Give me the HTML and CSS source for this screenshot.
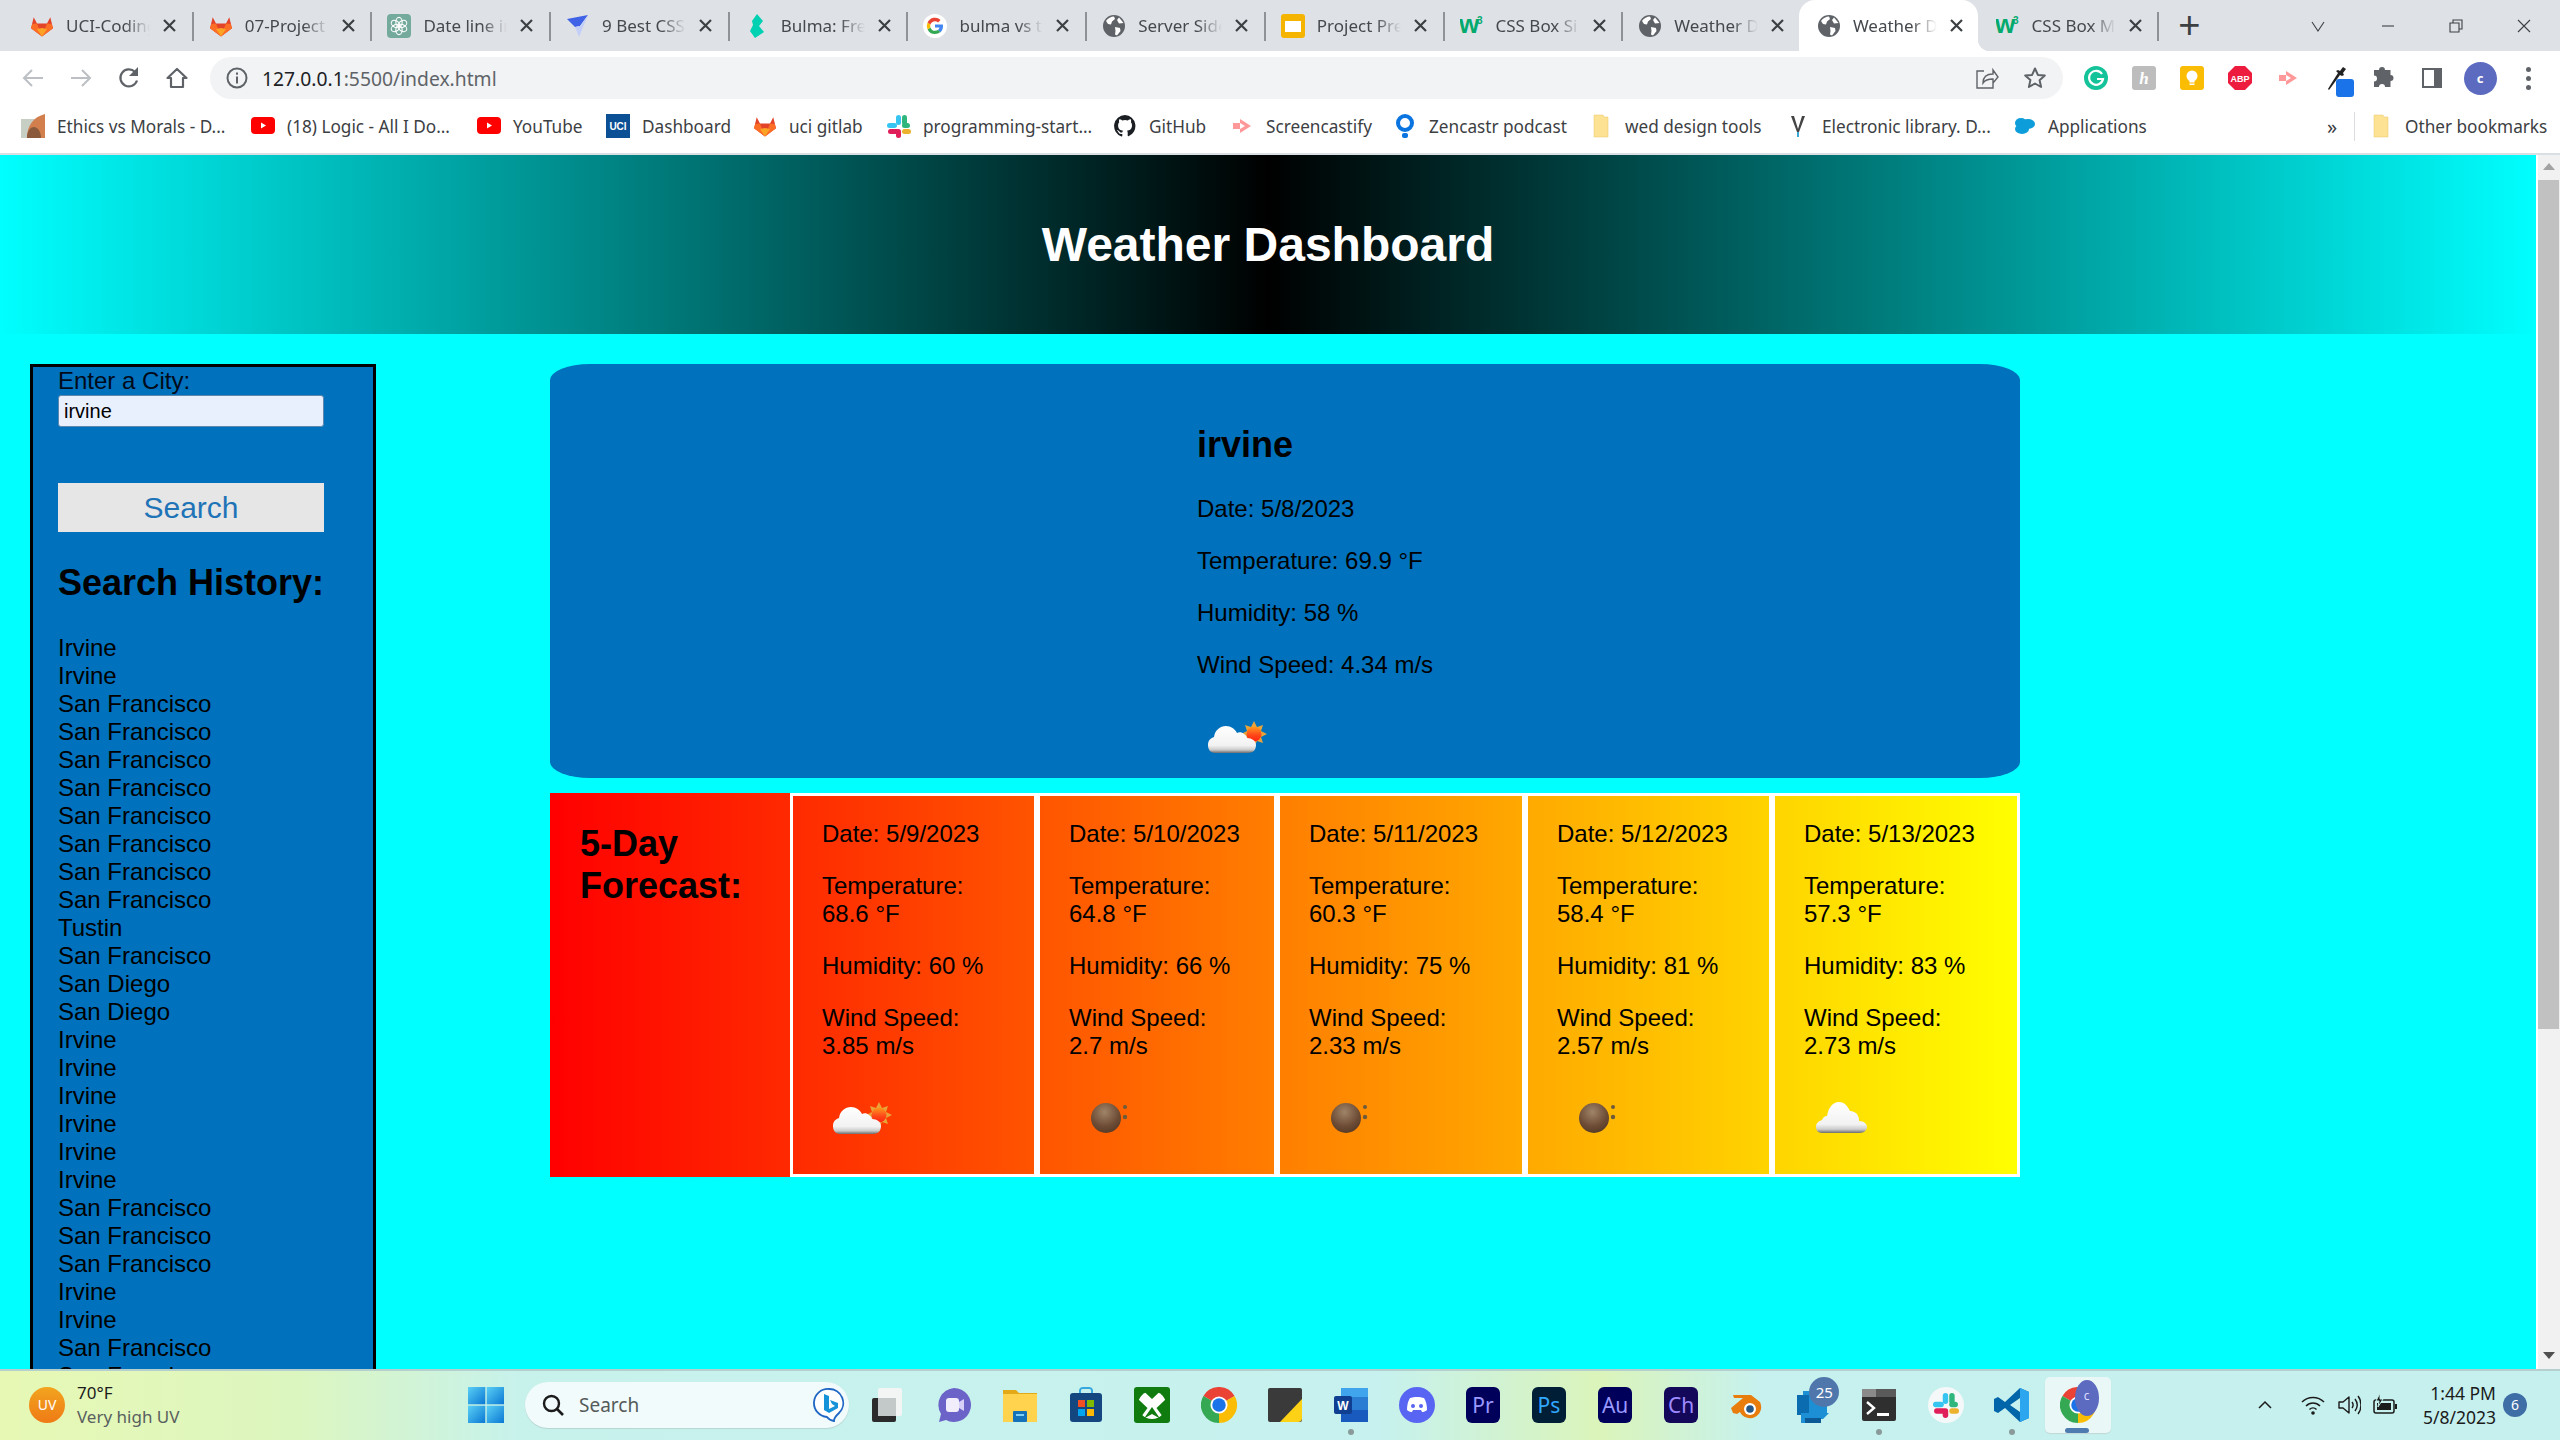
FILE: index.html
```html
<!DOCTYPE html>
<html lang="en">
<head>
<meta charset="utf-8">
<title>Weather Dashboard</title>
<link rel="stylesheet" href="styles.css">
</head>
<body>
<svg class="defs" aria-hidden="true">
  <defs>
    <linearGradient id="cloudfill" x1="0" y1="0" x2="0" y2="1">
      <stop offset="0" stop-color="#fff"/><stop offset=".72" stop-color="#f2f2f2"/><stop offset=".88" stop-color="#ccc"/><stop offset="1" stop-color="#6d6d6d"/>
    </linearGradient>
    <radialGradient id="ballfill" cx=".45" cy=".3" r=".8">
      <stop offset="0" stop-color="#a08468"/><stop offset=".6" stop-color="#6d4c35"/><stop offset="1" stop-color="#4d3525"/>
    </radialGradient>
    <linearGradient id="sunfill" x1="0" y1="0" x2="0" y2="1"><stop offset="0" stop-color="#ff9a1f"/><stop offset=".55" stop-color="#ff4a1a"/><stop offset="1" stop-color="#f21"/></linearGradient>
    <filter id="soft"><feGaussianBlur stdDeviation=".5"/></filter>
    <linearGradient id="winlogo" x1="0" y1="0" x2="1" y2="1"><stop offset="0" stop-color="#5ad0f5"/><stop offset="1" stop-color="#0a78d4"/></linearGradient>
    <symbol id="gitlab" viewBox="0 0 24 24">
      <path fill="#e24329" d="M12 22.5 1 14.2 3.7 3.2 7 9.5h10l3.3-6.3L23 14.2z"/>
      <path fill="#fc6d26" d="M12 22.5 1 14.2 2.4 10 7 9.5zM12 22.5 23 14.2 21.6 10 17 9.5z"/>
      <path fill="#fca326" d="M12 22.5 7 15 12 14l5 1z"/>
    </symbol>
    <symbol id="openai" viewBox="0 0 24 24">
      <rect width="24" height="24" rx="4" fill="#74aa9c"/>
      <g fill="none" stroke="#fff" stroke-width="1.1"><ellipse cx="12" cy="8" rx="3.2" ry="4.6"/><ellipse cx="12" cy="8" rx="3.2" ry="4.6" transform="rotate(60 12 12)"/><ellipse cx="12" cy="8" rx="3.2" ry="4.6" transform="rotate(120 12 12)"/><ellipse cx="12" cy="8" rx="3.2" ry="4.6" transform="rotate(180 12 12)"/><ellipse cx="12" cy="8" rx="3.2" ry="4.6" transform="rotate(240 12 12)"/><ellipse cx="12" cy="8" rx="3.2" ry="4.6" transform="rotate(300 12 12)"/></g>
    </symbol>
    <symbol id="plane" viewBox="0 0 24 24">
      <path fill="#3f62e6" d="M1 5 22 1 14 12 9 13z"/>
      <path fill="#c3cff8" d="M9 13 14 12 22 1 13 23z"/>
    </symbol>
    <symbol id="bulma" viewBox="0 0 24 24"><path fill="#00d1b2" d="M7 7 12 0l6 7-4 5 5 6-9 6-5-7 3-6z"/></symbol>
    <symbol id="google" viewBox="0 0 24 24">
      <circle cx="12" cy="12" r="12" fill="#fff"/>
      <path fill="#4285f4" d="M20 12.2c0-.6 0-1.1-.1-1.6H12v3h4.5a3.900 3.900 0 0 1-1.700 2.500l2.700 2.100c1.600-1.500 2.500-3.600 2.500-6z"/>
      <path fill="#34a853" d="M12 20c2.200 0 4-.7 5.500-1.900l-2.700-2.100c-.7.500-1.700.800-2.800.800-2.100 0-4-1.500-4.600-3.400L4.600 15.500A8 8 0 0 0 12 20z"/>
      <path fill="#fbbc05" d="M7.400 13.400a5 5 0 0 1 0-2.900L4.600 8.400a8 8 0 0 0 0 7.100z"/>
      <path fill="#ea4335" d="M12 7.200c1.200 0 2.300.4 3.100 1.200l2.400-2.400A8 8 0 0 0 4.600 8.400l2.800 2.100C8 8.600 9.900 7.200 12 7.200z"/>
    </symbol>
    <symbol id="globe" viewBox="0 0 24 24">
      <circle cx="12" cy="12" r="11" fill="#5f6368"/>
      <path fill="#fff" d="M4 7c2-3 5-4.500 8-4.500l1 2.500-3 2.500-1 3-3-.5zM13 13l5 1 .5 3-3.500 4.500-2-1 .5-3.500zM17 3.500 21.500 9 17 9.500 15 6z"/>
    </symbol>
    <symbol id="slides" viewBox="0 0 24 24"><rect width="24" height="24" rx="3" fill="#f4b400"/><rect x="4" y="7" width="16" height="11" fill="#fff"/></symbol>
    <symbol id="w3" viewBox="0 0 24 24"><text x="-1" y="19" class="w3w">w</text><text x="17" y="10" class="w3n">3</text></symbol>
    <symbol id="close" viewBox="0 0 13 13"><path fill="none" stroke="#3c4043" stroke-width="2.200" d="M1 1l11 11M12 1 1 12"/></symbol>
    <symbol id="yt" viewBox="0 0 24 24"><rect y="3" width="24" height="17" rx="4" fill="#f00"/><path fill="#fff" d="M10 8.500v6l5-3z"/></symbol>
    <symbol id="ethics" viewBox="0 0 24 24"><rect y="5" width="24" height="19" fill="#c7cfc4"/><path fill="#d27f4d" d="M6 24C6 12 12 3 24 0v24z"/><path fill="#8b5a3c" d="M6 24c0-7 3-11 7-11s7 5 7 11z"/></symbol>
    <symbol id="uci" viewBox="0 0 24 24"><rect width="24" height="24" fill="#0b4f94"/><text x="12" y="16" class="uci">UCI</text></symbol>
    <symbol id="slack" viewBox="0 0 24 24">
      <g fill="#36c5f0"><rect x="9" y="1" width="5" height="10" rx="2.500"/><rect x="1" y="9" width="10" height="5" rx="2.500" transform="translate(-1 0)"/></g>
      <g fill="#2eb67d"><rect x="15" y="1" width="5" height="10" rx="2.500"/><rect x="15" y="9" width="8" height="5" rx="2.500"/></g>
      <g fill="#ecb22e"><rect x="15" y="15" width="9" height="5" rx="2.500"/><rect x="9" y="18" width="5" height="5" rx="2.500"/></g>
      <g fill="#e01e5a"><rect x="3" y="15" width="11" height="5" rx="2.500" transform="translate(-2 0)"/><rect x="9" y="15" width="5" height="9" rx="2.500"/></g>
    </symbol>
    <symbol id="github" viewBox="0 0 24 24"><path fill="#1b1f23" d="M12 1a11 11 0 0 0-3.500 21.400c.6.100.8-.200.800-.500v-2c-3.100.700-3.700-1.400-3.700-1.400-.500-1.300-1.200-1.600-1.200-1.600-1-.700.100-.700.100-.700 1.100.100 1.700 1.100 1.700 1.100 1 1.700 2.600 1.200 3.200.900.100-.700.400-1.200.700-1.500-2.500-.300-5-1.200-5-5.400 0-1.200.400-2.200 1.100-3-.100-.300-.500-1.400.100-2.900 0 0 .900-.300 3 1.100a10 10 0 0 1 5.500 0c2.100-1.400 3-1.100 3-1.100.600 1.500.200 2.600.100 2.900.700.800 1.100 1.800 1.100 3 0 4.200-2.600 5.100-5 5.400.400.300.700 1 .700 2v3c0 .300.200.600.800.500A11 11 0 0 0 12 1z"/></symbol>
    <symbol id="castify" viewBox="0 0 24 24"><path fill="#f99" d="M3 9h7V5l11 7-11 7v-4H3z"/><path fill="#fff" d="M10 9l5 3-5 3z"/></symbol>
    <symbol id="zencastr" viewBox="0 0 24 24"><circle cx="12" cy="9" r="7" fill="none" stroke="#0a74e0" stroke-width="4"/><rect x="9" y="19" width="6" height="5" rx="2" fill="#0a74e0"/></symbol>
    <symbol id="folder" viewBox="0 0 24 24"><path fill="#fde293" stroke="#e6c566" stroke-width=".5" d="M5 1h9l1 2h4v20H5z"/></symbol>
    <symbol id="vlib" viewBox="0 0 24 24"><path fill="#444" d="M5 2h3l4 13 4-13h3l-6 16h-2z"/><rect x="11" y="18" width="2" height="5" fill="#3ba7d6"/></symbol>
    <symbol id="cloudsf" viewBox="0 0 24 24"><g fill="#0d9dda"><ellipse cx="9" cy="9" rx="6" ry="5"/><ellipse cx="16" cy="10" rx="7" ry="5"/><ellipse cx="10" cy="15" rx="7" ry="5"/></g></symbol>

    <symbol id="wx-partly" viewBox="0 0 80 76">
      <g filter="url(#soft)">
        <polygon fill="#e8a33a" points="57,18 60,24 66,22 64,28 70,31 64,34 66,40 60,38 57,44 54,38 48,40 50,34 44,31 50,28 48,22 54,24"/>
        <circle cx="57" cy="31" r="7.500" fill="url(#sunfill)"/>
        <path fill="url(#cloudfill)" d="M18 50c-5 0-7-4-7-8 0-5 3-7 6-8 1-7 6-11 12-11 5 0 9 3 11 7 2-1 5-1 7 1 2 1 3 3 3 4 5 0 9 3 9 7 0 5-3 8-8 8z"/>
      </g>
    </symbol>
    <symbol id="wx-cloud" viewBox="0 0 80 76">
      <path filter="url(#soft)" fill="url(#cloudfill)" d="M18 49c-4 0-6-3-6-6 0-4 3-6 6-7 1-2 2-4 5-4 1-7 5-14 12-14 6 0 9 5 11 9 0 0 6 0 8 5 1 2 1 3 1 5 5 0 8 3 8 6 0 3-3 6-7 6z"/>
    </symbol>
    <symbol id="wx-rain" viewBox="0 0 80 76">
      <g filter="url(#soft)">
        <ellipse cx="37" cy="34" rx="15" ry="15" fill="url(#ballfill)"/>
        <circle cx="56" cy="23" r="2" fill="#6d5a3a"/><circle cx="56" cy="33" r="2.200" fill="#6d5a3a"/>
      </g>
    </symbol>

    <symbol id="arrow-l" viewBox="0 0 24 24"><path fill="none" stroke="currentColor" stroke-width="2" d="M22 12H3M11 4l-8 8 8 8"/></symbol>
    <symbol id="arrow-r" viewBox="0 0 24 24"><path fill="none" stroke="currentColor" stroke-width="2" d="M2 12h19M13 4l8 8-8 8"/></symbol>
    <symbol id="reload" viewBox="0 0 24 24"><path fill="none" stroke="currentColor" stroke-width="2.200" d="M20 14.500A8.500 8.500 0 1 1 18 6"/><path fill="currentColor" d="M21 1v9h-9z"/></symbol>
    <symbol id="home" viewBox="0 0 24 24"><path fill="none" stroke="currentColor" stroke-width="2.200" stroke-linejoin="round" d="M12 3 2.500 12H6v9h12v-9h3.500z"/></symbol>
    <symbol id="info" viewBox="0 0 24 24"><circle cx="12" cy="12" r="9.500" fill="none" stroke="currentColor" stroke-width="2"/><rect x="11" y="10.500" width="2" height="7" fill="currentColor"/><rect x="11" y="6.500" width="2" height="2.200" fill="currentColor"/></symbol>
    <symbol id="share" viewBox="0 0 24 24"><path fill="none" stroke="currentColor" stroke-width="1.400" d="M9 5H2v17h16v-5M8 17c0-6 4-9 10-9V4l5 7-5 6v-4c-5 0-8 1-10 4z"/></symbol>
    <symbol id="star" viewBox="0 0 24 24"><path fill="none" stroke="currentColor" stroke-width="2" stroke-linejoin="round" d="m12 2.500 2.900 6.400 6.900.700-5.200 4.600 1.500 6.800L12 17.500 5.900 20.900l1.500-6.800L2.200 9.500l6.900-.600z"/></symbol>
    <symbol id="grammarly" viewBox="0 0 24 24"><circle cx="12" cy="12" r="12" fill="#15c39a"/><path fill="none" stroke="#fff" stroke-width="2.200" d="M18 8a7 7 0 1 0 1 5h-6"/></symbol>
    <symbol id="honey" viewBox="0 0 24 24"><rect width="24" height="24" rx="3" fill="#bdbdbd"/><text x="12" y="18" class="hny">h</text></symbol>
    <symbol id="keep" viewBox="0 0 24 24"><rect width="24" height="24" rx="3" fill="#fbbc04"/><circle cx="12" cy="10" r="5.500" fill="#fff"/><rect x="9.500" y="15" width="5" height="1.500" fill="#fff"/><rect x="9.500" y="17.500" width="5" height="1.500" fill="#fff"/></symbol>
    <symbol id="abp" viewBox="0 0 24 24"><path fill="#ed1c3f" d="M7 0h10l7 7v10l-7 7H7l-7-7V7z"/><text x="12" y="16" class="abp">ABP</text></symbol>
    <symbol id="dropper" viewBox="0 0 24 24"><path fill="#222" d="M8 20 5 24l-1-1 3-5L14 7l-2-2 2-1 2 1 3-4 3 2-3 4 1 2-2 1-2-1z"/></symbol>
    <symbol id="puzzle" viewBox="0 0 24 24"><path fill="#5f6368" d="M10 1a2.800 2.800 0 0 1 3 3h5.500v5a3 3 0 0 1 0 6v6H13a3 3 0 0 0-6 0H2v-5.500a3 3 0 0 0 0-6V4h5a3 3 0 0 1 3-3z"/></symbol>
    <symbol id="panel" viewBox="0 0 24 24"><path fill="none" stroke="#5f6368" stroke-width="2" d="M3 3h18v18H3z"/><rect x="14" y="3" width="8" height="18" fill="#5f6368"/></symbol>

    <symbol id="win" viewBox="0 0 36 36"><rect width="17.300" height="17.300" fill="url(#winlogo)"/><rect x="18.700" width="17.300" height="17.300" fill="url(#winlogo)"/><rect y="18.700" width="17.300" height="17.300" fill="url(#winlogo)"/><rect x="18.700" y="18.700" width="17.300" height="17.300" fill="url(#winlogo)"/></symbol>
    <symbol id="mag" viewBox="0 0 24 24"><circle cx="10.500" cy="10.500" r="7.500" fill="none" stroke="#1b1b1b" stroke-width="2.400"/><path stroke="#1b1b1b" stroke-width="2.600" d="m16 16 6 6"/></symbol>
    <symbol id="bing" viewBox="0 0 32 36"><path fill="#fff" stroke="#1f66c4" stroke-width="1.800" d="M16 2a14 14 0 0 1 10 24c-2 2-5 4-5 8-5-1-7-4-7-4A14 14 0 0 1 16 2z"/><path fill="#1592d8" d="M11 7l5 2v13l6-3-3-2-2-4 8 3v5l-9 5-5-3z"/></symbol>
    <symbol id="tv" viewBox="0 0 36 36"><rect x="8" y="1" width="24" height="28" rx="2" fill="#f3f5f5" /><rect x="2" y="11" width="24" height="24" rx="2" fill="#2b2b2b"/><rect x="8" y="11" width="18" height="18" fill="#c3c8c8"/></symbol>
    <symbol id="meet" viewBox="0 0 36 36"><path fill="#6c63c8" d="M18 1a17 17 0 1 1-8 32l-7 2 2-8A17 17 0 0 1 18 1z"/><rect x="10" y="11" width="13" height="14" rx="3" fill="#f1edfb"/><path fill="#d8d0f7" d="m23 15 5-3v12l-5-3z"/></symbol>
    <symbol id="explorer" viewBox="0 0 36 36"><path fill="#e3a917" d="M1 3h13l3 3h18v6H1z"/><rect x="1" y="7" width="34" height="28" fill="#ffd34d"/><rect x="11" y="24" width="14" height="11" rx="1" fill="#1473b8"/><rect x="14" y="27" width="8" height="2" fill="#7fd0f5"/></symbol>
    <symbol id="store" viewBox="0 0 36 36"><path fill="none" stroke="#37a7de" stroke-width="2" d="M12 8V3a3 3 0 0 1 3-2h6a3 3 0 0 1 3 2v5"/><rect x="2" y="6" width="32" height="29" rx="3" fill="#14467f"/><rect x="10" y="13" width="7" height="7" fill="#f25022"/><rect x="19" y="13" width="7" height="7" fill="#7fba00"/><rect x="10" y="22" width="7" height="7" fill="#00a4ef"/><rect x="19" y="22" width="7" height="7" fill="#ffb900"/></symbol>
    <symbol id="xbox" viewBox="0 0 36 36"><rect width="36" height="36" rx="3" fill="#107c10"/><circle cx="18" cy="18" r="14" fill="#fff"/><path fill="#107c10" d="M10 4.500 18 12 26 4.500 23 3H13zM4 12 13.500 21 7 30 4 26zM32 12 22.500 21 29 30 32 26zM18 20 10 31.500 18 27 26 31.500z"/></symbol>
    <symbol id="chrome" viewBox="0 0 24 24"><path fill="#ea4335" d="M12 12 1.600 6A12 12 0 0 1 22.400 6z"/><path fill="#34a853" d="M12 12 1.600 6A12 12 0 0 0 12 24z"/><path fill="#fbbc04" d="M12 12 22.400 6A12 12 0 0 1 12 24z"/><circle cx="12" cy="12" r="5.700" fill="#fff"/><circle cx="12" cy="12" r="4.500" fill="#1a73e8"/></symbol>
    <symbol id="notes" viewBox="0 0 36 36"><rect x="1" y="1" width="34" height="34" rx="2" fill="#3a3a3a"/><path fill="#fcd116" d="M35 12 13 35h18a4 4 0 0 0 4-4z"/></symbol>
    <symbol id="word" viewBox="0 0 36 36"><rect x="8" y="1" width="27" height="34" rx="2" fill="#2b7cd3"/><rect x="8" y="1" width="27" height="9" fill="#41a5ee"/><rect x="8" y="23" width="27" height="12" fill="#185abd"/><rect x="1" y="9" width="18" height="18" rx="2" fill="#103f91"/><text x="10" y="23" class="wrd">W</text></symbol>
    <symbol id="discord" viewBox="0 0 36 36"><circle cx="18" cy="18" r="18" fill="#5865f2"/><path fill="#fff" d="M11 11c4-1.500 10-1.500 14 0 2 3 3 7 3 12-2 1.500-3 2-5 2l-1-2h-8l-1 2c-2 0-3-.500-5-2 0-5 1-9 3-12z"/><circle cx="14" cy="19" r="2" fill="#5865f2"/><circle cx="22" cy="19" r="2" fill="#5865f2"/></symbol>
    <symbol id="blender" viewBox="0 0 36 36"><path fill="#e87d0d" d="M2 21 14 11 5 11l-1-3h18L31 15a10.500 10.500 0 1 1-20 10L8 27 4 26z"/><circle cx="21" cy="22" r="6" fill="#fff"/><circle cx="21" cy="22" r="3.800" fill="#265787"/></symbol>
    <symbol id="outlook" viewBox="0 0 36 36"><rect x="8" y="4" width="24" height="22" fill="#1d8fd4"/><path fill="#0c6cb0" d="M2 8h12v20H2z"/><path fill="#1d8fd4" d="M6 26h28l-6 6H12v4H6z"/><rect x="10" y="31" width="16" height="5" fill="#0b5a96"/></symbol>
    <symbol id="terminal" viewBox="0 0 36 36"><rect x="1" y="2" width="34" height="32" rx="2" fill="#2f2f2f"/><rect x="1" y="2" width="14" height="8" fill="#8a8a8a"/><rect x="15" y="2" width="20" height="8" fill="#5a5a5a"/><path fill="none" stroke="#fff" stroke-width="2.400" d="m6 15 7 6-7 6"/><rect x="16" y="26" width="12" height="3" fill="#fff"/></symbol>
    <symbol id="vscode" viewBox="0 0 36 36"><path fill="#0065a9" d="M26 1 35 5v26l-9 4L11 21l-7 5-4-2v-12l4-2 7 5zM26 11 16 18l10 7z"/><path fill="#2ca6ee" d="M26 1 35 5v26l-9 4z"/></symbol>
    <symbol id="wifi" viewBox="0 0 24 24"><g fill="none" stroke="#1b1b1b" stroke-width="1.500"><path d="M1 9c6-6 16-6 22 0"/><path d="M5 13c4-4 10-4 14 0"/><path d="M8.500 16.500c2-2 5-2 7 0"/></g><circle cx="12" cy="20" r="1.800" fill="#1b1b1b"/></symbol>
    <symbol id="speaker" viewBox="0 0 24 24"><path fill="none" stroke="#1b1b1b" stroke-width="1.400" stroke-linejoin="round" d="M2 9h4l6-5v16l-6-5H2z"/><path fill="none" stroke="#1b1b1b" stroke-width="1.400" d="M15 9c1.500 2 1.500 4 0 6M18 6c3 4 3 8 0 12M21 3c4 5 4 13 0 18"/></symbol>
    <symbol id="battery" viewBox="0 0 24 24"><rect x="1" y="7" width="20" height="13" rx="2" fill="none" stroke="#1b1b1b" stroke-width="1.500"/><rect x="4" y="10" width="14" height="7" fill="#1b1b1b"/><rect x="22" y="11" width="2" height="5" fill="#1b1b1b"/><path fill="#1b1b1b" stroke="#c6f2ee" d="M7 0 3 8h3l-1 6 5-8H7z"/></symbol>
  </defs>
</svg>

<header class="chrome">
  <div class="tabstrip">
    <div class="tab"><svg class="fav"><use href="#gitlab"/></svg><span class="tab-title">UCI-Coding</span><svg class="tab-x"><use href="#close"/></svg></div>
    <div class="tab"><svg class="fav"><use href="#gitlab"/></svg><span class="tab-title">07-Project</span><svg class="tab-x"><use href="#close"/></svg></div>
    <div class="tab"><svg class="fav"><use href="#openai"/></svg><span class="tab-title">Date line in</span><svg class="tab-x"><use href="#close"/></svg></div>
    <div class="tab"><svg class="fav"><use href="#plane"/></svg><span class="tab-title">9 Best CSS</span><svg class="tab-x"><use href="#close"/></svg></div>
    <div class="tab"><svg class="fav"><use href="#bulma"/></svg><span class="tab-title">Bulma: Free</span><svg class="tab-x"><use href="#close"/></svg></div>
    <div class="tab"><svg class="fav"><use href="#google"/></svg><span class="tab-title">bulma vs t</span><svg class="tab-x"><use href="#close"/></svg></div>
    <div class="tab"><svg class="fav"><use href="#globe"/></svg><span class="tab-title">Server Side</span><svg class="tab-x"><use href="#close"/></svg></div>
    <div class="tab"><svg class="fav"><use href="#slides"/></svg><span class="tab-title">Project Pre</span><svg class="tab-x"><use href="#close"/></svg></div>
    <div class="tab"><svg class="fav"><use href="#w3"/></svg><span class="tab-title">CSS Box Si</span><svg class="tab-x"><use href="#close"/></svg></div>
    <div class="tab tab-nosep"><svg class="fav"><use href="#globe"/></svg><span class="tab-title">Weather D</span><svg class="tab-x"><use href="#close"/></svg></div>
    <div class="tab tab-active"><svg class="fav"><use href="#globe"/></svg><span class="tab-title">Weather D</span><svg class="tab-x"><use href="#close"/></svg></div>
    <div class="tab"><svg class="fav"><use href="#w3"/></svg><span class="tab-title">CSS Box M</span><svg class="tab-x"><use href="#close"/></svg></div>
    <div class="newtab">+</div>
    <div class="winctl">
      <svg class="wc" viewBox="0 0 16 16"><path d="M2 4l6 9 6-9"/></svg>
      <svg class="wc" viewBox="0 0 16 16"><path d="M2 8h12"/></svg>
      <svg class="wc" viewBox="0 0 16 16"><path d="M2 5h9v9H2zM5 5V2h9v9h-3"/></svg>
      <svg class="wc" viewBox="0 0 16 16"><path d="M2 2l12 12M14 2 2 14"/></svg>
    </div>
  </div>
  <div class="toolbar">
    <span class="tbtn tbtn-off"><svg class="ti"><use href="#arrow-l"/></svg></span>
    <span class="tbtn tbtn-off"><svg class="ti"><use href="#arrow-r"/></svg></span>
    <span class="tbtn"><svg class="ti"><use href="#reload"/></svg></span>
    <span class="tbtn"><svg class="ti"><use href="#home"/></svg></span>
    <div class="omnibox">
      <svg class="ti omni-info"><use href="#info"/></svg>
      <span class="url">127.0.0.1<span class="url-dim">:5500/index.html</span></span>
      <span class="tbtn tbtn-end"><svg class="ti"><use href="#share"/></svg></span>
      <span class="tbtn"><svg class="ti"><use href="#star"/></svg></span>
    </div>
    <div class="exts">
      <span class="tbtn"><svg class="ti"><use href="#grammarly"/></svg></span>
      <span class="tbtn"><svg class="ti"><use href="#honey"/></svg></span>
      <span class="tbtn"><svg class="ti"><use href="#keep"/></svg></span>
      <span class="tbtn"><svg class="ti"><use href="#abp"/></svg></span>
      <span class="tbtn"><svg class="ti"><use href="#castify"/></svg></span>
      <span class="tbtn tbtn-drop"><svg class="ti"><use href="#dropper"/></svg><i class="drop-badge"></i></span>
      <span class="tbtn"><svg class="ti"><use href="#puzzle"/></svg></span>
      <span class="tbtn"><svg class="ti"><use href="#panel"/></svg></span>
      <span class="tbtn"><span class="avatar">c</span></span>
      <span class="tbtn"><span class="menu-dots"><i></i><i></i><i></i></span></span>
    </div>
  </div>
  <div class="bookmarks">
    <span class="bm"><svg class="fav"><use href="#ethics"/></svg>Ethics vs Morals - D...</span>
    <span class="bm"><svg class="fav"><use href="#yt"/></svg>(18) Logic - All I Do...</span>
    <span class="bm"><svg class="fav"><use href="#yt"/></svg>YouTube</span>
    <span class="bm"><svg class="fav"><use href="#uci"/></svg>Dashboard</span>
    <span class="bm"><svg class="fav"><use href="#gitlab"/></svg>uci gitlab</span>
    <span class="bm"><svg class="fav"><use href="#slack"/></svg>programming-start...</span>
    <span class="bm"><svg class="fav"><use href="#github"/></svg>GitHub</span>
    <span class="bm"><svg class="fav"><use href="#castify"/></svg>Screencastify</span>
    <span class="bm"><svg class="fav"><use href="#zencastr"/></svg>Zencastr podcast</span>
    <span class="bm"><svg class="fav"><use href="#folder"/></svg>wed design tools</span>
    <span class="bm"><svg class="fav"><use href="#vlib"/></svg>Electronic library. D...</span>
    <span class="bm"><svg class="fav"><use href="#cloudsf"/></svg>Applications</span>
    <span class="bm-more">»</span>
    <span class="bm"><svg class="fav"><use href="#folder"/></svg>Other bookmarks</span>
  </div>
</header>

<div class="viewport">
  <main class="page">
    <div class="banner"><h1 class="banner-title">Weather Dashboard</h1></div>
    <div class="content">
      <aside class="sidebar">
        <label class="city-label" for="city">Enter a City:</label>
        <input class="city-input" id="city" type="text" value="irvine">
        <button class="search-btn" type="button">Search</button>
        <h2 class="history-title">Search History:</h2>
        <ul class="history">
          <li>Irvine</li><li>Irvine</li>
          <li>San Francisco</li><li>San Francisco</li><li>San Francisco</li><li>San Francisco</li><li>San Francisco</li><li>San Francisco</li><li>San Francisco</li><li>San Francisco</li>
          <li>Tustin</li><li>San Francisco</li><li>San Diego</li><li>San Diego</li>
          <li>Irvine</li><li>Irvine</li><li>Irvine</li><li>Irvine</li><li>Irvine</li><li>Irvine</li>
          <li>San Francisco</li><li>San Francisco</li><li>San Francisco</li>
          <li>Irvine</li><li>Irvine</li><li>San Francisco</li><li>San Francisco</li>
        </ul>
      </aside>
      <section class="weather">
        <div class="today">
          <h2 class="today-city">irvine</h2>
          <p>Date: 5/8/2023</p>
          <p>Temperature: 69.9 °F</p>
          <p>Humidity: 58 %</p>
          <p>Wind Speed: 4.34 m/s</p>
          <svg class="wx"><use href="#wx-partly"/></svg>
        </div>
        <div class="forecast">
          <h2 class="forecast-title">5-Day Forecast:</h2>
          <article class="day">
            <p>Date: 5/9/2023</p><p>Temperature:<br>68.6 °F</p><p>Humidity: 60 %</p><p>Wind Speed:<br>3.85 m/s</p>
            <svg class="wx"><use href="#wx-partly"/></svg>
          </article>
          <article class="day">
            <p>Date: 5/10/2023</p><p>Temperature:<br>64.8 °F</p><p>Humidity: 66 %</p><p>Wind Speed:<br>2.7 m/s</p>
            <svg class="wx"><use href="#wx-rain"/></svg>
          </article>
          <article class="day">
            <p>Date: 5/11/2023</p><p>Temperature:<br>60.3 °F</p><p>Humidity: 75 %</p><p>Wind Speed:<br>2.33 m/s</p>
            <svg class="wx"><use href="#wx-rain"/></svg>
          </article>
          <article class="day">
            <p>Date: 5/12/2023</p><p>Temperature:<br>58.4 °F</p><p>Humidity: 81 %</p><p>Wind Speed:<br>2.57 m/s</p>
            <svg class="wx"><use href="#wx-rain"/></svg>
          </article>
          <article class="day">
            <p>Date: 5/13/2023</p><p>Temperature:<br>57.3 °F</p><p>Humidity: 83 %</p><p>Wind Speed:<br>2.73 m/s</p>
            <svg class="wx"><use href="#wx-cloud"/></svg>
          </article>
        </div>
      </section>
    </div>
  </main>
  <div class="scrollbar">
    <span class="sb-btn sb-up"></span>
    <span class="sb-thumb"></span>
    <span class="sb-track"></span>
    <span class="sb-btn sb-down"></span>
  </div>
</div>

<footer class="taskbar">
  <div class="tb-weather">
    <span class="uv">UV</span>
    <span class="tb-wtext"><span class="tb-temp">70°F</span><span class="tb-desc">Very high UV</span></span>
  </div>
  <svg class="tb-start"><use href="#win"/></svg>
  <div class="tb-search">
    <svg class="tb-mag"><use href="#mag"/></svg>
    <span class="tb-search-text">Search</span>
    <svg class="tb-bing"><use href="#bing"/></svg>
  </div>
  <div class="tiles">
    <span class="tile"><svg class="ti-l"><use href="#tv"/></svg></span>
    <span class="tile"><svg class="ti-l"><use href="#meet"/></svg></span>
    <span class="tile"><svg class="ti-l"><use href="#explorer"/></svg></span>
    <span class="tile"><svg class="ti-l"><use href="#store"/></svg></span>
    <span class="tile"><svg class="ti-l"><use href="#xbox"/></svg></span>
    <span class="tile"><svg class="ti-l"><use href="#chrome"/></svg></span>
    <span class="tile"><svg class="ti-l"><use href="#notes"/></svg></span>
    <span class="tile tile-run"><svg class="ti-l"><use href="#word"/></svg></span>
    <span class="tile"><svg class="ti-l"><use href="#discord"/></svg></span>
    <span class="tile"><span class="adobe adobe-pr">Pr</span></span>
    <span class="tile"><span class="adobe adobe-ps">Ps</span></span>
    <span class="tile"><span class="adobe adobe-au">Au</span></span>
    <span class="tile"><span class="adobe adobe-ch">Ch</span></span>
    <span class="tile"><svg class="ti-l"><use href="#blender"/></svg></span>
    <span class="tile"><svg class="ti-l"><use href="#outlook"/></svg><span class="tile-badge">25</span></span>
    <span class="tile tile-run"><svg class="ti-l"><use href="#terminal"/></svg></span>
    <span class="tile"><span class="slack-disc"><svg class="slack-i"><use href="#slack"/></svg></span></span>
    <span class="tile tile-run"><svg class="ti-l"><use href="#vscode"/></svg></span>
    <span class="tile tile-active"><svg class="ti-l"><use href="#chrome"/></svg><span class="tile-avatar">c</span></span>
  </div>
  <div class="tray">
    <svg class="tray-chev" viewBox="0 0 16 16"><path d="M2 11l6-6 6 6"/></svg>
    <span class="tray-i"><svg class="ti"><use href="#wifi"/></svg></span>
    <span class="tray-i"><svg class="ti"><use href="#speaker"/></svg></span>
    <span class="tray-i"><svg class="ti"><use href="#battery"/></svg></span>
    <span class="clock"><span>1:44 PM</span><span>5/8/2023</span></span>
    <span class="notif">6</span>
  </div>
</footer>
</body>
</html>
```
FILE: styles.css
```css
* { box-sizing: border-box; }
html, body { margin: 0; height: 1440px; overflow: hidden; }
body { display: flex; flex-direction: column; width: 2560px; font-family: "Liberation Sans", Arial, sans-serif; background: #fff; }
.defs { position: absolute; width: 0; height: 0; overflow: hidden; }
.w3w { font: 700 26px "Liberation Sans", sans-serif; fill: #04aa6d; }
.w3n { font: 700 10px "Liberation Sans", sans-serif; fill: #04aa6d; }
.uci { font: 700 10px "Liberation Sans", sans-serif; fill: #fff; text-anchor: middle; }
.hny { font: italic 700 17px "Liberation Serif", serif; fill: #fff; text-anchor: middle; }
.abp { font: 700 9px "Liberation Sans", sans-serif; fill: #fff; text-anchor: middle; }
.wrd { font: 700 12px "Liberation Sans", sans-serif; fill: #fff; text-anchor: middle; }

/* Browser chrome */
.chrome { flex: none; font-family: "Noto Sans", "Open Sans", sans-serif; }
.tabstrip { display: flex; align-items: center; height: 51px; padding-left: 15px; background: #dee1e6; }
.tab { position: relative; display: flex; align-items: center; flex: none; width: 178.7px; height: 51px; padding-left: 15px; font-size: 17px; color: #45494d; }
.tab::after { content: ""; position: absolute; right: 0; top: 12px; width: 2px; height: 29px; background: #8f9398; }
.tab-nosep::after, .tab-active::after { display: none; }
.tab-active { width: 179px; margin: 0 2.700px 0 -3px; padding-left: 18px; background: #fff; border-radius: 16px 16px 0 0; }
.tab-active::before { content: ""; position: absolute; right: -12px; bottom: 0; width: 12px; height: 12px; background: radial-gradient(circle at 100% 0, transparent 12px, #fff 12.500px); }
.fav { flex: none; width: 24px; height: 24px; }
.tab-title { flex: none; width: 84px; margin-left: 12px; overflow: hidden; white-space: nowrap; -webkit-mask-image: linear-gradient(to right, #000 70%, transparent 100%); mask-image: linear-gradient(to right, #000 70%, transparent 100%); }
.tab-x { flex: none; width: 13px; height: 13px; margin-left: 13px; }
.newtab { flex: none; width: 44px; margin-left: 8px; text-align: center; font-size: 38px; line-height: 51px; color: #3c4043; font-family: "Liberation Sans", sans-serif; }
.winctl { display: flex; margin-left: auto; padding-right: 2px; }
.wc { width: 68px; height: 16px; fill: none; stroke: #3c4043; stroke-width: 1.100; }
.wc:first-child { width: 72px; }

.toolbar { display: flex; align-items: flex-start; height: 56px; padding: 6px 0 0 9px; background: #fff; }
.tbtn { display: flex; align-items: center; justify-content: center; flex: none; width: 48px; height: 42px; color: #5f6368; position: relative; }
.tbtn-off { color: #bcbfc3; }
.tbtn-end { margin-left: auto; }
.ti { width: 24px; height: 24px; }
.omnibox { display: flex; align-items: center; flex: none; width: 1853px; height: 42px; margin-left: 9px; padding: 0 4px 0 15px; background: #f1f3f4; border-radius: 21px; }
.omni-info { flex: none; color: #5f6368; }
.url { margin-left: 13px; font-size: 19.300px; color: #202124; white-space: nowrap; }
.url-dim { color: #5f6368; }
.exts { display: flex; margin-left: 9px; }
.drop-badge { position: absolute; left: 24px; top: 22px; width: 18px; height: 18px; background: #1a73e8; border-radius: 3px; }
.avatar { display: flex; align-items: center; justify-content: center; width: 33px; height: 33px; border-radius: 50%; background: #5c6bc0; color: #fff; font-size: 13px; font-weight: 700; }
.menu-dots { display: flex; flex-direction: column; gap: 4px; }
.menu-dots i { display: block; width: 5px; height: 5px; border-radius: 50%; background: #5f6368; }

.bookmarks { display: grid; grid-template-columns: 230px 226px 129px 147px 134px 226px 117px 163px 196px 197px 226px 315px 42px 1fr; align-items: center; height: 48px; padding: 0 0 8px 21px; background: #fff; border-bottom: 2px solid #d9dfe2; font-size: 17.200px; color: #3c4043; }
.bm { display: flex; align-items: center; gap: 12px; white-space: nowrap; }
.bm-more { position: relative; font-size: 20px; line-height: 29px; }
.bm-more::after { content: ""; position: absolute; left: 27px; top: 0; width: 1px; height: 29px; background: #dadce0; }

/* Page */
.viewport { display: flex; flex: none; height: 1214px; }
.page { flex: none; width: 2536px; height: 1214px; overflow: hidden; background: #0ff; }
.banner { display: flex; align-items: center; justify-content: center; height: 179px; padding-bottom: 1px; background: linear-gradient(to right, #0ff, #000, #0ff); }
.banner-title { margin: 0; font-size: 48px; font-weight: 700; color: #fff; }
.content { display: flex; align-items: flex-start; padding: 30px 0 0 30px; }

.sidebar { flex: none; width: 346px; padding: 0 25px; background: #0071bc; border: 3px solid #000; font-size: 24px; line-height: 28px; }
.city-label { display: block; color: #000a18; }
.city-input { display: block; width: 266px; height: 32px; padding: 0 5px; background: #e8f0fe; border: 1px solid #5d87ad; border-radius: 3px; font: 20px "Liberation Sans", sans-serif; color: #000; outline: none; }
.search-btn { display: block; width: 266px; height: 49px; margin-top: 56px; padding: 0; background: #e6e6e6; border: 0; font: 30px "Liberation Sans", sans-serif; color: #1f73b7; }
.history-title { margin: 30px 0 0; font-size: 36px; line-height: 41px; white-space: nowrap; }
.history { list-style: none; margin: 31px 0 0; padding: 0; }

.weather { flex: none; width: 1470px; margin-left: 174px; font-size: 24px; line-height: 28px; color: #000; }
.weather p { margin: 0 0 24px; }
.today { height: 414px; padding: 60px 0 0 647px; background: #0071bc; border-radius: 40px / 16px; }
.today-city { margin: 0 0 30px; font-size: 36px; line-height: 41px; }
.wx { display: block; width: 80px; height: 76px; }

.forecast { display: grid; grid-template-columns: 240px 247px 240px 248px 247px 248px; height: 384px; margin-top: 15px; background: linear-gradient(to right, #f00, #ff0); }
.forecast-title { margin: 0; padding: 30px 40px 0 30px; font-size: 36px; line-height: 42px; }
.day { border: 3px solid #fff; padding: 24px 0 0 29px; }

/* Scrollbar */
.scrollbar { display: flex; flex-direction: column; flex: none; width: 24px; height: 1214px; background: #f1f1f1; border-left: 2px solid #fff; }
.sb-btn { flex: none; height: 25px; position: relative; }
.sb-up::before, .sb-down::before { content: ""; position: absolute; left: 5px; top: 8px; border: 6px solid transparent; border-top: 0; border-bottom: 7px solid #a3a3a3; }
.sb-down::before { border-bottom: 0; border-top: 7px solid #505050; }
.sb-thumb { flex: none; height: 849px; margin-right: 1px; background: #c1c1c1; }
.sb-track { flex: 1; }

/* Taskbar */
.taskbar { display: flex; align-items: center; flex: none; height: 71px; padding: 0 0 2px 29px; border-top: 2px solid #b4cfcd; font-family: "Noto Sans", "Open Sans", sans-serif; color: #1b1b1b; background: linear-gradient(to right, #e7f8b4 0, #dcf6c0 300px, #c7f2ec 520px, #c6f1ee 1380px, #dbf4ba 1600px, #c6f1ee 1760px, #c5f0ee 2560px); }
.tb-weather { display: flex; align-items: center; flex: none; width: 439px; gap: 12px; }
.uv { display: flex; align-items: center; justify-content: center; width: 36px; height: 36px; border-radius: 50%; background: linear-gradient(#f2a41f, #ef7a15); color: #fff; font-size: 14px; }
.tb-wtext { display: flex; flex-direction: column; font-size: 17px; line-height: 24px; }
.tb-temp { color: #1b1b1b; }
.tb-desc { color: #5a5f5f; }
.tb-start { flex: none; width: 36px; height: 36px; }
.tb-search { display: flex; align-items: center; flex: none; width: 324px; height: 46px; margin: 0 6px 0 21px; padding: 0 4px 0 16px; background: #f1fbfb; border-radius: 23px; box-shadow: 0 1px 1px #b7d4d2; }
.tb-mag { flex: none; width: 24px; height: 24px; }
.tb-search-text { flex: 1; margin-left: 14px; font-size: 19px; color: #555a5a; }
.tb-bing { flex: none; width: 32px; height: 36px; }
.tiles { display: flex; flex: none; }
.tile { display: flex; align-items: center; justify-content: center; position: relative; flex: none; width: 66.100px; height: 56px; }
.ti-l { width: 36px; height: 36px; }
.tile-run::after { content: ""; position: absolute; left: 30px; bottom: -2px; width: 6px; height: 6px; border-radius: 50%; background: #8a9a9a; }
.tile-active { background: #e9f8f7; border-radius: 5px; box-shadow: 0 1px 1px #c1d8d6; }
.tile-active::after { content: ""; position: absolute; left: 20px; bottom: 0; width: 24px; height: 5px; border-radius: 3px; background: #4f7cb0; }
.tile-badge { position: absolute; left: 29px; top: 0; width: 30px; height: 30px; border-radius: 50%; background: #4f77ac; color: #fff; font-size: 15px; line-height: 30px; text-align: center; }
.tile-avatar { position: absolute; left: 30px; top: 3px; width: 24px; height: 36px; border-radius: 50%; background: #5c6bc0; color: #dcdcff; font-size: 12px; line-height: 32px; text-align: center; }
.adobe { display: flex; align-items: center; justify-content: center; width: 34px; height: 36px; border-radius: 6px; font-size: 21px; }
.adobe-pr { background: #00005b; color: #9999ff; }
.adobe-ps { background: #001e36; color: #31a8ff; }
.adobe-au { background: #00005b; color: #9999ff; }
.adobe-ch { background: #14085a; color: #9d8bff; }
.slack-disc { display: flex; align-items: center; justify-content: center; width: 36px; height: 36px; border-radius: 50%; background: #f4f8f8; }
.slack-i { width: 26px; height: 26px; }
.tray { display: flex; align-items: center; margin-left: auto; padding-right: 33px; }
.tray-chev { width: 36px; height: 16px; fill: none; stroke: #1b1b1b; stroke-width: 1.500; margin-right: 12px; }
.tray-i { display: flex; justify-content: center; width: 36px; }
.clock { display: flex; flex-direction: column; align-items: flex-end; width: 93px; font-size: 17.500px; line-height: 24px; }
.notif { display: flex; align-items: center; justify-content: center; width: 24px; height: 24px; margin-left: 7px; border-radius: 50%; background: #3f6ea6; color: #fff; font-size: 14px; }
```
